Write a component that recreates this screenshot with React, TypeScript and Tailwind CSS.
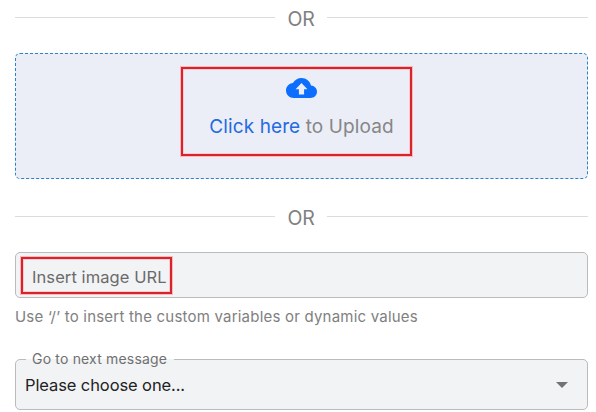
import React from "react";

function Divider() {
  return (
    <div className="flex h-6 items-center">
      <div className="h-px w-[260px] bg-[#dcdcdc]" />
      <span className="w-[52px] pt-[4px] text-center text-[19.5px] leading-6 tracking-[-0.3px] text-[#808080]">OR</span>
      <div className="h-px w-[261px] bg-[#dcdcdc]" />
    </div>
  );
}

export default function App() {
  return (
    <main className="h-[412px] w-[596px] overflow-hidden bg-white pt-[5px] pl-[15px] font-['Inter','Liberation_Sans',sans-serif]">
      <div className="w-[573px]">
        <Divider />
        <div className="mt-6 flex h-[126px] justify-center rounded-[5px] border border-dashed border-[#2b82c9] bg-[#ebeef6] pt-[13px]">
          <div className="mr-[10px] flex h-[89px] w-[231px] flex-col items-center border-2 border-[#d8232a] pt-[9px] pl-[10px] shadow-[0_0_0_1px_#f9b9bd,inset_0_0_0_1px_#f5cdd3]">
            <svg className="h-[20px] w-[31px]" viewBox="0 4 24 16" preserveAspectRatio="none" fill="#0d6efd">
              <path d="M19.35 10.04C18.67 6.59 15.64 4 12 4 9.11 4 6.6 5.64 5.35 8.04 2.34 8.36 0 10.91 0 14c0 3.31 2.69 6 6 6h13c2.76 0 5-2.24 5-5 0-2.64-2.05-4.78-4.65-4.96zM14 13v4.200h-4V13H7.400L12 8l4.600 5z" />
            </svg>
            <p className="mt-[17px] text-[19px] leading-6 tracking-[0.1px] whitespace-nowrap text-[#868686]">
              <span className="text-[#256ae0]">Click here</span> to Upload
            </p>
          </div>
        </div>
        <div className="mt-[25px]">
          <Divider />
        </div>
        <div className="mt-6 h-[46px] rounded-[5px] border border-[#b9bbbd] bg-[#f2f3f5] pt-1 pl-[5px]">
          <div className="flex h-[37px] w-[151px] items-center border-2 border-[#d8232a] pt-[3px] pl-[9px] text-[16.5px] tracking-[0.08px] whitespace-nowrap text-[#6a6a6a] shadow-[0_0_0_1px_#f9b9bd,inset_0_0_0_1px_#f5cdd3]">
            Insert image URL
          </div>
        </div>
        <p className="mt-[9px] text-[15px] leading-5 tracking-[0.21px] whitespace-nowrap text-[#808080]">
          Use ‘/’ to insert the custom variables or dynamic values
        </p>
        <div className="relative mt-8 flex h-[51px] items-center justify-between rounded-[5px] border border-[#b9bbbd] bg-[#f2f3f5] pr-[19px] pl-[9px]">
          <span className="absolute -top-px left-[10px] h-px w-[148px] bg-[#f2f3f5]" />
          <span className="absolute -top-[11px] left-[16px] text-[14px] leading-5 tracking-[0.18px] whitespace-nowrap text-[#707070]">Go to next message</span>
          <span className="pt-[2px] text-[16.5px] tracking-[-0.1px] whitespace-nowrap text-[#222]">Please choose one...</span>
          <svg className="h-[6px] w-[12px]" viewBox="0 0 12 6" fill="#737373"><path d="M0 0h12L6 6z" /></svg>
        </div>
      </div>
    </main>
  );
}
